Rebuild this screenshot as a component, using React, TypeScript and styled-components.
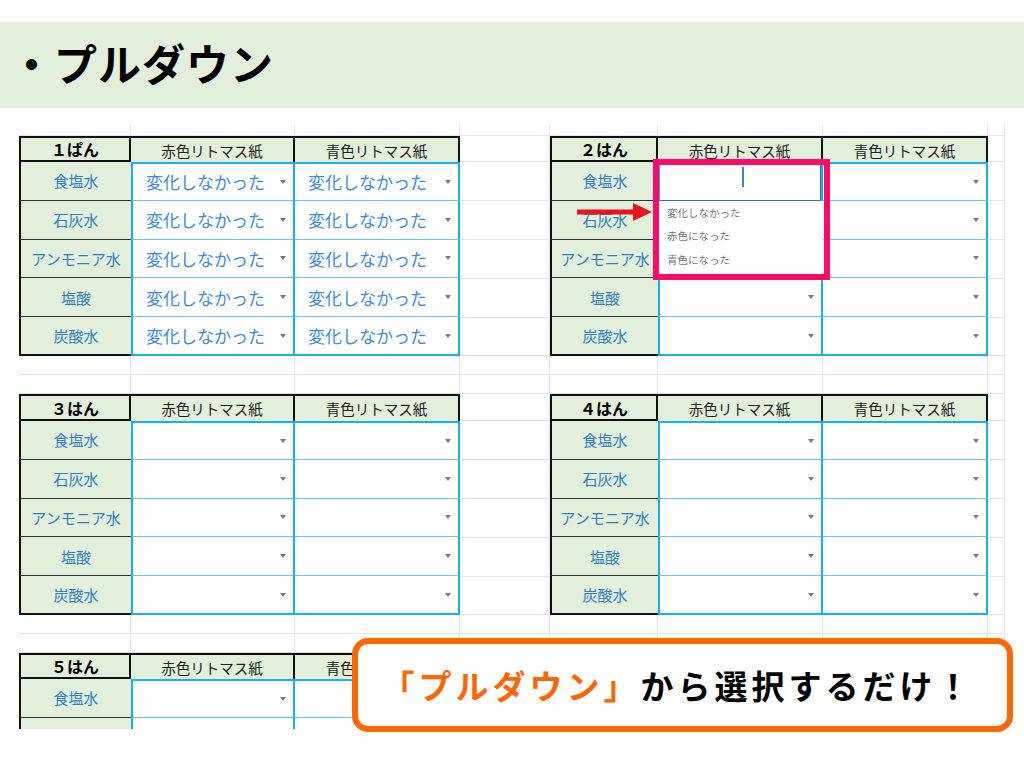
import styled, { createGlobalStyle } from "styled-components";

const GlobalStyle = createGlobalStyle`
  body {
    margin: 0;
    background: #fff;
    font-family: "Noto Sans CJK JP", "Noto Sans", sans-serif;
  }
`;

// spreadsheet tracks (px)
const COLS = [112, 164, 165, 90, 108, 165, 165, 17];
const ROWS = [11, 26, 39, 39, 39, 39, 38, 19, 19, 27, 39, 39, 39, 39, 38, 19, 19, 26, 39, 11];

const LABELS = ["食塩水", "石灰水", "アンモニア水", "塩酸", "炭酸水"];
const OPTIONS = ["変化しなかった", "赤色になった", "青色になった"];

const TABLES = [
  { title: "１ぱん", col: 1, row: 2, span: 6, head: 26, widths: [112, 164, 165], labels: LABELS, value: "変化しなかった" },
  { title: "２はん", col: 5, row: 2, span: 6, head: 26, widths: [108, 165, 165], labels: LABELS, selected: true },
  { title: "３はん", col: 1, row: 10, span: 6, head: 27, widths: [112, 164, 165], labels: LABELS },
  { title: "４はん", col: 5, row: 10, span: 6, head: 27, widths: [108, 165, 165], labels: LABELS },
  // only the first row and the top strip of the second are in view
  { title: "５はん", col: 1, row: 18, span: 3, head: 26, widths: [112, 164, 165], labels: ["食塩水", ""] },
];

const Page = styled.div`
  position: relative;
  width: 1024px;
  height: 768px;
  padding-top: 22px;
  box-sizing: border-box;
  overflow: hidden;
`;

const TitleBand = styled.div`
  height: 86px;
  box-sizing: border-box;
  padding: 0 0 6px 10px;
  background: #e2efda;
  display: flex;
  align-items: center;
  font-size: 43px;
  font-weight: 700;
  letter-spacing: 1px;
  color: #000;
`;

const Sheet = styled.div`
  display: grid;
  grid-template-columns: ${COLS.map((c) => c + "px").join(" ")};
  grid-template-rows: ${ROWS.map((r) => r + "px").join(" ")};
  width: fit-content;
  margin: 17px 0 0 19px;
  overflow: hidden;
`;

const GridCell = styled.div<{ $r: number; $c: number }>`
  grid-row: ${(p) => p.$r};
  grid-column: ${(p) => p.$c};
  border-right: 1px solid #e3e3e3;
  border-bottom: 1px solid #e3e3e3;
`;

const Table = styled.div<{ $col: number; $row: number; $span: number; $head: number; $widths: number[] }>`
  grid-column: ${(p) => p.$col} / span 3;
  grid-row: ${(p) => p.$row} / span ${(p) => p.$span};
  align-self: start;
  display: grid;
  grid-template-columns: ${(p) => p.$widths.map((w) => w + "px").join(" ")};
  grid-template-rows: ${(p) => p.$head}px repeat(5, 38.8px);
  color: #222;
`;

const HeadCell = styled.div<{ $first?: boolean }>`
  box-sizing: border-box;
  display: flex;
  align-items: center;
  justify-content: center;
  background: #e2efda;
  border-top: 2px solid #111;
  border-right: 2px solid #111;
  font-size: 14.5px;
  color: #222;
  ${(p) =>
    p.$first &&
    `
    border-left: 2px solid #111;
    border-bottom: 2px solid #111;
    font-size: 16px;
    font-weight: 700;
    color: #000;
  `}
`;

const LabelCell = styled.div<{ $last?: boolean }>`
  box-sizing: border-box;
  display: flex;
  align-items: center;
  justify-content: center;
  background: #e2efda;
  border-left: 2px solid #111;
  border-bottom: ${(p) => (p.$last ? "2px solid #111" : "1px solid #333")};
  font-size: 15px;
  color: #2f7fc1;
  white-space: nowrap;
`;

const DropCell = styled.div<{ $first?: boolean; $top?: boolean; $last?: boolean; $selected?: boolean }>`
  box-sizing: border-box;
  position: ${(p) => (p.$selected ? "relative" : "static")};
  z-index: ${(p) => (p.$selected ? 5 : "auto")};
  display: flex;
  align-items: center;
  padding: 0 7px 0 13px;
  background: #fff;
  border-right: 2px solid #14b1ef;
  border-left: ${(p) => (p.$first ? "2px solid #14b1ef" : "none")};
  border-top: ${(p) => (p.$top ? "2px solid #14b1ef" : "none")};
  border-bottom: ${(p) => (p.$last ? "2px solid #14b1ef" : "1px solid #5ec6f2")};
  font-size: 17px;
  color: #3d8bd4;
  white-space: nowrap;
`;

const Arrow = styled.span`
  margin-left: auto;
  width: 0;
  height: 0;
  border-left: 3.5px solid transparent;
  border-right: 3.5px solid transparent;
  border-top: 4px solid #7a7a7a;
`;

const EditBox = styled.div`
  position: absolute;
  inset: -2px 0 -1px -2px;
  border: 1.5px solid #2a6fdb;
`;

const Caret = styled.span`
  position: absolute;
  left: 83px;
  top: 4px;
  width: 1.5px;
  height: 20px;
  background: #3b82d6;
`;

const DropList = styled.div`
  position: absolute;
  top: calc(100% + 1px);
  left: -2px;
  right: -2px;
  height: 75px;
  padding-top: 0;
  box-sizing: border-box;
  background: #fff;
`;

const Option = styled.div`
  height: 23.5px;
  line-height: 23.5px;
  padding-left: 9px;
  font-size: 10.5px;
  color: #767676;
`;

const PinkFrame = styled.div`
  position: absolute;
  left: -7px;
  top: -5px;
  width: 177px;
  height: 121px;
  box-sizing: border-box;
  border: 6px solid #ff0a68;
  pointer-events: none;
`;

const PointerArrow = styled.svg`
  position: absolute;
  left: -83px;
  top: 39px;
`;

const Callout = styled.div`
  position: absolute;
  left: 352px;
  top: 638px;
  width: 661px;
  height: 94px;
  box-sizing: border-box;
  border: 6px solid #ff6600;
  border-radius: 16px;
  background: #fff;
  display: flex;
  align-items: center;
  justify-content: center;
  padding-right: 10px;
  font-size: 33px;
  font-weight: 700;
  letter-spacing: 4px;
  color: #000;
`;

const Accent = styled.span`
  color: #ff6600;
`;

type TableDef = (typeof TABLES)[number];

const SelectedCell = () => (
  <DropCell $first $top $selected>
    <EditBox>
      <Caret />
    </EditBox>
    <DropList>
      {OPTIONS.map((o) => (
        <Option key={o}>{o}</Option>
      ))}
    </DropList>
    <PinkFrame />
    <PointerArrow width="76" height="18" viewBox="0 0 76 18">
      <rect x="0" y="6.5" width="60" height="5" fill="#e8141c" />
      <polygon points="56,0 75,9 56,18" fill="#e8141c" />
    </PointerArrow>
  </DropCell>
);

const LitmusTable = ({ t }: { t: TableDef }) => (
  <Table $col={t.col} $row={t.row} $span={t.span} $head={t.head} $widths={t.widths}>
    <HeadCell $first>{t.title}</HeadCell>
    <HeadCell>赤色リトマス紙</HeadCell>
    <HeadCell>青色リトマス紙</HeadCell>
    {t.labels.map((label, i) => {
      const top = i === 0;
      const last = i === LABELS.length - 1;
      const value = "value" in t ? t.value : "";
      return [
        <LabelCell key={i + "l"} $last={last}>
          {label}
        </LabelCell>,
        "selected" in t && top ? (
          <SelectedCell key={i + "r"} />
        ) : (
          <DropCell key={i + "r"} $first $top={top} $last={last}>
            {value}
            <Arrow />
          </DropCell>
        ),
        <DropCell key={i + "b"} $top={top} $last={last}>
          {value}
          <Arrow />
        </DropCell>,
      ];
    })}
  </Table>
);

const App = () => {
  return (
    <Page>
      <GlobalStyle />
      <TitleBand>・プルダウン</TitleBand>
      <Sheet>
        {ROWS.map((_, r) =>
          COLS.map((_, c) => <GridCell key={`${r}-${c}`} $r={r + 1} $c={c + 1} />)
        )}
        {TABLES.map((t) => (
          <LitmusTable key={t.title} t={t} />
        ))}
      </Sheet>
      <Callout>
        <Accent>「プルダウン」</Accent>から選択するだけ！
      </Callout>
    </Page>
  );
};

export default App;
